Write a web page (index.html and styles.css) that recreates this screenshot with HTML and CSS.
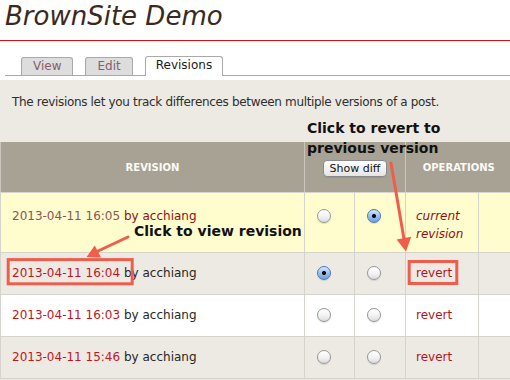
FILE: index.html
```html
<!DOCTYPE html>
<html lang="en">
<head>
<meta charset="utf-8">
<title>BrownSite Demo</title>
<link rel="stylesheet" href="styles.css">
</head>
<body>
<div class="page">
  <h1 class="site-title">BrownSite Demo</h1>
  <ul class="tabs">
    <li class="tab">View</li>
    <li class="tab">Edit</li>
    <li class="tab tab-active">Revisions</li>
  </ul>
  <div class="content">
    <p class="intro">The revisions let you track differences between multiple versions of a post.</p>
    <table class="revs">
      <colgroup>
        <col class="col-rev">
        <col class="col-radio">
        <col class="col-radio2">
        <col class="col-op">
        <col class="col-extra">
      </colgroup>
      <thead>
        <tr>
          <th class="th-label">REVISION</th>
          <th class="th-diff" colspan="2"><button class="diff-btn" type="button">Show diff</button></th>
          <th class="th-label" colspan="2">OPERATIONS</th>
        </tr>
      </thead>
      <tbody>
        <tr class="row-current">
          <td><span class="date date-current">2013-04-11 16:05</span> <span class="author author-current">by acchiang</span></td>
          <td><input class="radio" type="radio" name="left"></td>
          <td><input class="radio" type="radio" name="right" checked></td>
          <td class="op"><em class="current-label">current revision</em></td>
          <td></td>
        </tr>
        <tr class="row-alt">
          <td><a class="date">2013-04-11 16:04</a> <span class="author">by acchiang</span></td>
          <td><input class="radio" type="radio" name="left" checked></td>
          <td><input class="radio" type="radio" name="right"></td>
          <td class="op"><a class="revert">revert</a></td>
          <td></td>
        </tr>
        <tr class="row-plain">
          <td><a class="date">2013-04-11 16:03</a> <span class="author">by acchiang</span></td>
          <td><input class="radio" type="radio" name="left"></td>
          <td><input class="radio" type="radio" name="right"></td>
          <td class="op"><a class="revert">revert</a></td>
          <td></td>
        </tr>
        <tr class="row-alt">
          <td><a class="date">2013-04-11 15:46</a> <span class="author">by acchiang</span></td>
          <td><input class="radio" type="radio" name="left"></td>
          <td><input class="radio" type="radio" name="right"></td>
          <td class="op"><a class="revert">revert</a></td>
          <td></td>
        </tr>
      </tbody>
    </table>
  </div>

  <div class="notes">
    <svg class="marks" width="510" height="380" viewBox="0 0 510 380">
      <g fill="none" stroke="#ef5d4d" stroke-width="3">
        <rect x="8.2" y="259.6" width="124" height="24.2"/>
        <rect x="409.2" y="261.5" width="47.6" height="22"/>
      </g>
      <g stroke="#ef5d4d" stroke-width="3" stroke-linecap="round">
        <line x1="128" y1="237" x2="97" y2="251.5"/>
        <line x1="391" y1="163" x2="404" y2="239"/>
      </g>
      <g fill="#ef5d4d">
        <polygon points="86.5,257 94.8,245.6 101,257.4"/>
        <polygon points="406,251.5 396.6,239.6 411.2,236.8"/>
      </g>
    </svg>
    <p class="note note-revert">Click to revert to<br>previous version</p>
    <p class="note note-view">Click to view revision</p>
  </div>
</div>
</body>
</html>
```

FILE: styles.css
```css
html, body {
  margin: 0;
  padding: 0;
  background: #ffffff;
}

body {
  width: 510px;
  height: 380px;
  overflow: hidden;
  font-family: "DejaVu Sans", "Noto Sans", sans-serif;
  font-size: 12px;
  color: #2b2b2b;
}

.page {
  position: relative;
  width: 510px;
  height: 380px;
}

.site-title {
  margin: 0;
  padding: 1px 0 9px 5px;
  font-size: 26px;
  line-height: 30px;
  font-weight: normal;
  font-style: italic;
  color: #3a2a1e;
  border-bottom: 1px solid #d80c0c;
}

.tabs {
  display: flex;
  align-items: flex-end;
  gap: 12px;
  list-style: none;
  margin: 15px 0 4px 5px;
  padding: 0 0 0 16px;
  height: 19px;
  border-bottom: 1px solid #a9a9a9;
}

.tab {
  padding: 0 11px;
  height: 17px;
  line-height: 17px;
  font-size: 12px;
  color: #8a5c6b;
  background: #dddddd;
  border: 1px solid #a9a9a9;
  border-bottom: none;
  border-radius: 3px 3px 0 0;
}

.tab-active {
  height: 19px;
  margin-bottom: -1px;
  padding: 0 10px;
  color: #1a1a1a;
  background: #ffffff;
}

.content {
  background: #edeae4;
  height: 300px;
  overflow: hidden;
}

.intro {
  margin: 0;
  padding: 13px 12px 0;
  line-height: 18px;
  letter-spacing: -0.33px;
  color: #2e2e2e;
}

.revs {
  margin-top: 31px;
  width: 511px;
  border-collapse: collapse;
  table-layout: fixed;
  border-left: 1px solid #d4d1ca;
}

.col-rev { width: 304px; }
.col-radio { width: 50px; }
.col-radio2 { width: 51px; }
.col-op { width: 73px; }
.col-extra { width: 33px; }

.revs th {
  height: 50px;
  padding: 0;
  background: #a8a295;
  color: #fbfaf6;
  font-size: 10px;
  font-weight: bold;
  vertical-align: middle;
  border-left: 1px solid #cbc6bc;
  border-bottom: 1px solid #d8d5ce;
}

.th-label {
  padding-bottom: 5px;
}

.diff-btn {
  display: inline-block;
  margin-top: 2px;
  width: 64px;
  height: 17px;
  padding: 0;
  font-family: "DejaVu Sans", sans-serif;
  font-size: 11px;
  line-height: 15px;
  color: #111111;
  background: linear-gradient(#ffffff, #f1f1f1 55%, #e4e4e4);
  border: 1px solid #8a8a8a;
  border-radius: 4px;
  box-shadow: 0 1px 0 rgba(0, 0, 0, 0.08);
}

.revs td {
  padding: 11px 10px 12px 11px;
  line-height: 18px;
  vertical-align: top;
  border-left: 1px solid #d6d3cc;
  border-bottom: 1px solid #d6d3cc;
  white-space: nowrap;
}

.revs td.op {
  white-space: normal;
  padding-left: 10px;
}

.row-current td {
  padding-top: 14px;
  padding-bottom: 9px;
  background: #fffcce;
}

.row-alt td {
  background: #edeae4;
}

.row-plain td {
  background: #ffffff;
}

.date {
  color: #c1161f;
  text-decoration: none;
}

.date-current {
  color: #8d5458;
}

.author {
  color: #262626;
}

.author-current {
  color: #8e1014;
}

.current-label {
  color: #8e1014;
  font-style: italic;
}

.revert {
  color: #b3151d;
  text-decoration: none;
}

.radio {
  -webkit-appearance: none;
  appearance: none;
  display: block;
  width: 14px;
  height: 14px;
  margin: 2px 0 0 1px;
  border: 1px solid #979797;
  border-radius: 50%;
  background: linear-gradient(#ffffff, #f4f4f4 50%, #dcdcdc);
  box-shadow: 0 1px 1px rgba(0, 0, 0, 0.12);
  box-sizing: border-box;
}

.radio:checked {
  border-color: #5478ad;
  background:
    radial-gradient(circle, #111111 0, #111111 1.8px, transparent 2.3px),
    linear-gradient(#d5e6fb, #9cc0f2 50%, #6d9fe6);
}

.notes {
  position: absolute;
  inset: 0;
  pointer-events: none;
}

.marks {
  position: absolute;
  left: 0;
  top: 0;
}

.note {
  position: absolute;
  margin: 0;
  font-size: 14px;
  font-weight: bold;
  line-height: 20px;
  color: #111111;
  white-space: nowrap;
}

.note-revert {
  left: 307px;
  top: 118px;
}

.note-view {
  left: 134px;
  top: 221px;
}
```
